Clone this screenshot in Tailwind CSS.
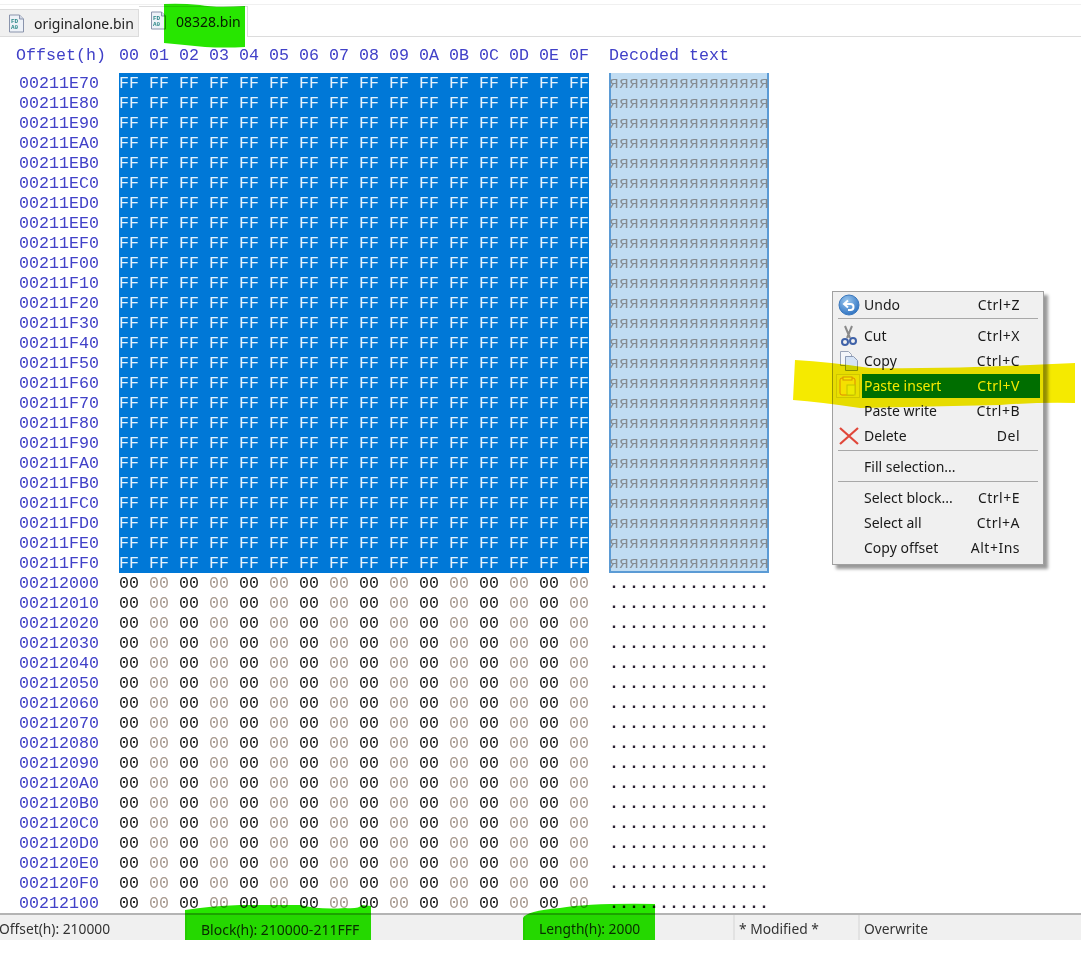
<!DOCTYPE html>
<html lang="en">
<head>
  <meta charset="UTF-8">
  <title>08328.bin</title>
  <script src="https://cdn.jsdelivr.net/npm/@tailwindcss/browser@4"></script>
</head>
<body class="bg-white">
<div class="relative w-[1081px] h-[954px] overflow-hidden bg-white font-['Noto_Sans',sans-serif]">

  <!-- Tabs -->
  <div class="h-[33px] mt-[4px] flex items-end border-t border-b border-t-[#f0f0f0] border-b-[#dcdcdc]">
    <div class="w-[139px] h-[27px] flex items-center gap-[10px] pl-[9px] bg-[#f0f0f0] border-t border-r border-[#dcdcdc] text-[14px] text-[#222]">
      <svg width="15" height="19" viewBox="0 0 15 18" class="shrink-0"><path d="M.5.500h10l4 4v13H.5z" fill="#eef2f8" stroke="#8a94ac"/><path d="M10.500.500v4h4" fill="#cfd6e4" stroke="#8a94ac"/><text x="2" y="8" font-size="6" font-weight="700" fill="#2f8a8a" font-family="Liberation Mono">FD</text><text x="2" y="14" font-size="6" font-weight="700" fill="#2f8a8a" font-family="Liberation Mono">A0</text></svg>
      <span>originalone.bin</span>
    </div>
    <div class="w-[109px] h-[31px] -mb-px flex items-center gap-[10px] pl-[12px] bg-white border-t border-r border-[#dcdcdc] text-[14px] text-[#222]">
      <svg width="15" height="19" viewBox="0 0 15 18" class="shrink-0 -mt-[3px]"><path d="M.5.500h10l4 4v13H.5z" fill="#eef2f8" stroke="#8a94ac"/><path d="M10.500.500v4h4" fill="#cfd6e4" stroke="#8a94ac"/><text x="2" y="8" font-size="6" font-weight="700" fill="#2f8a8a" font-family="Liberation Mono">FD</text><text x="2" y="14" font-size="6" font-weight="700" fill="#2f8a8a" font-family="Liberation Mono">A0</text></svg>
      <span class="-mt-px">08328.bin</span>
    </div>
  </div>

  <!-- Hex view -->
  <div class="font-['Liberation_Mono',monospace] text-[16.67px] leading-[22px] whitespace-nowrap">
    <div class="flex h-[20px] mt-[8px] mb-[8px] text-[#4141c8]">
      <div class="w-[119px] pl-[16px]">Offset(h)</div>
      <div id="head" class="w-[490px] flex"></div>
      <div>Decoded text</div>
    </div>
    <div id="rows"></div>
  </div>

  <!-- Status bar -->
  <div class="h-[27px] flex items-center bg-[#f0f0f0] border-t-2 border-[#b4b4b4] text-[13.8px] text-[#333]">
    <div class="w-[185px] h-full pt-[3px] flex items-center -indent-px">Offset(h): 210000</div>
    <div class="w-[338px] h-full pt-[3px] flex items-center pl-[14px] border-l-2 border-[#e2e2e2] text-[14px]">Block(h): 210000-211FFF</div>
    <div class="w-[210px] h-full pt-[3px] flex items-center pl-[14px] border-l-2 border-[#e2e2e2]">Length(h): 2000</div>
    <div class="w-[125px] h-full pt-[3px] flex items-center pl-[4px] border-l-2 border-[#e2e2e2]">* Modified *</div>
    <div class="flex-1 h-full pt-[3px] flex items-center pl-[4px] border-l-2 border-[#e2e2e2]">Overwrite</div>
  </div>

  <!-- Context menu -->
  <div class="absolute left-[832px] top-[291px] w-[212px] h-[274px] px-[2px] bg-[#f0f0f0] border border-[#a0a0a0] shadow-[4px_4px_3px_rgba(0,0,0,0.4)] text-[14px] text-[#1a1a1a]">
    <div class="flex h-[25px] items-center">
      <div class="w-[28px] flex justify-center"><svg width="22" height="22" viewBox="0 0 22 22"><defs><radialGradient id="u" cx="40%" cy="30%" r="75%"><stop offset="0" stop-color="#9cc8ee"/><stop offset="1" stop-color="#2a6fc0"/></radialGradient></defs><circle cx="11" cy="11" r="10" fill="url(#u)" stroke="#3b78bd"/><path d="M10 6.500 6 10l4 3.500M6.500 10H12.500a3 3 0 0 1 0 6H10" fill="none" stroke="#fff" stroke-width="2"/></svg></div>
      <span class="ml-px">Undo</span><span class="ml-auto mr-[21px] tracking-[0.5px]">Ctrl+Z</span>
    </div>
    <div class="h-[6px] pt-px"><div class="mx-[3px] h-px bg-[#a8a8a8]"></div></div>
    <div class="flex h-[25px] items-center">
      <div class="w-[28px] flex justify-center"><svg width="18" height="22" viewBox="0 0 18 22"><path d="M5 1 10 13M12 1 7 13" stroke="#8a8a8a" stroke-width="2" fill="none"/><circle cx="5" cy="17" r="3" fill="none" stroke="#3f62a8" stroke-width="2"/><circle cx="13" cy="16" r="3" fill="none" stroke="#3f62a8" stroke-width="2"/></svg></div>
      <span class="ml-px">Cut</span><span class="ml-auto mr-[21px] tracking-[0.5px]">Ctrl+X</span>
    </div>
    <div class="flex h-[25px] items-center">
      <div class="w-[28px] flex justify-center"><svg width="20" height="20" viewBox="0 0 20 20"><path d="M1.500.5h8l3 3v11h-11z" fill="#f4f6fa" stroke="#9aa4b8"/><path d="M6.500 5.500h8l4 4v10h-12z" fill="#d6e4f6" stroke="#8c9ab4"/></svg></div>
      <span class="ml-px">Copy</span><span class="ml-auto mr-[21px] tracking-[0.5px]">Ctrl+C</span>
    </div>
    <div class="flex h-[25px] items-center">
      <div class="w-[26px] h-full flex justify-center items-center"><div class="w-[24px] h-[24px] flex justify-center items-center bg-[#f4f4e4] border border-[#d8d8c0]"><svg width="18" height="20" viewBox="0 0 18 20"><rect x="1" y="2" width="15" height="17" rx="2" fill="#fff4c8" stroke="#e89830"/><rect x="4" y="1" width="9" height="3" fill="#fff" stroke="#e0a040"/><rect x="8" y="9" width="8" height="10" fill="#f6fff0" stroke="#c8d8a0"/></svg></div></div>
      <div class="flex flex-1 h-[24px] items-center ml-px mr-px bg-[#0078d7] text-white"><span class="ml-[2px]">Paste insert</span><span class="ml-auto mr-[20px] tracking-[0.5px]">Ctrl+V</span></div>
    </div>
    <div class="flex h-[25px] items-center">
      <div class="w-[28px]"></div>
      <span class="ml-px">Paste write</span><span class="ml-auto mr-[21px] tracking-[0.5px]">Ctrl+B</span>
    </div>
    <div class="flex h-[25px] items-center">
      <div class="w-[28px] flex justify-center"><svg width="20" height="18" viewBox="0 0 20 18"><path d="M1 1 19 17M19 1 1 17" stroke="#e0473a" stroke-width="2.200"/></svg></div>
      <span class="ml-px">Delete</span><span class="ml-auto mr-[21px] tracking-[0.5px]">Del</span>
    </div>
    <div class="h-[6px] pt-[2px]"><div class="mx-[3px] h-px bg-[#a8a8a8]"></div></div>
    <div class="flex h-[25px] items-center pl-[29px]">Fill selection...</div>
    <div class="h-[6px] pt-[2px]"><div class="mx-[3px] h-px bg-[#a8a8a8]"></div></div>
    <div class="flex h-[25px] items-center pl-[29px]"><span>Select block...</span><span class="ml-auto mr-[21px] tracking-[0.5px]">Ctrl+E</span></div>
    <div class="flex h-[25px] items-center pl-[29px]"><span>Select all</span><span class="ml-auto mr-[21px] tracking-[0.5px]">Ctrl+A</span></div>
    <div class="flex h-[25px] items-center pl-[29px]"><span>Copy offset</span><span class="ml-auto mr-[21px] tracking-[0.5px]">Alt+Ins</span></div>
  </div>

  <!-- Marker scribbles -->
  <svg class="absolute left-0 top-0 mix-blend-multiply pointer-events-none" width="1081" height="954" viewBox="0 0 1081 954">
    <path d="M164 4 Q180 3 200 5 Q215 8 245 6 L245 47 Q225 48 205 47 Q185 45 164 43Z" fill="#27e600"/>
    <path d="M185 910 Q210 906 240 905 L300 905 Q320 910 345 908 Q360 909 361 905 L371 906 L371 940 L185 940Z" fill="#27e600"/>
    <path d="M523 918 Q526 911 560 908 Q590 903 655 904 L655 940 L523 940Z" fill="#27e600"/>
    <path d="M795 360 Q830 362 870 368 Q950 369 1030 365 L1075 363 L1075 403 Q1040 402 1000 405 L860 408 Q820 402 793 400Z" fill="#f5ea00"/>
  </svg>
</div>

<script>
  var head = document.getElementById('head');
  var names = ['00','01','02','03','04','05','06','07','08','09','0A','0B','0C','0D','0E','0F'];
  names.forEach(function(n) {
    var s = document.createElement('span');
    s.className = 'w-[30px]';
    s.textContent = n;
    head.appendChild(s);
  });

  var html = '';
  for (var i = 0; i < 42; i++) {
    var offset = (0x211E70 + i * 16).toString(16).toUpperCase().padStart(8, '0');
    var selected = i < 25;
    var cells = '';
    for (var c = 0; c < 16; c++) {
      var cls = c == 15 ? 'w-[20px]' : 'w-[30px]';
      if (selected) {
        cells += '<span class="' + cls + ' text-[#e6f2fb]">FF</span>';
      } else if (c % 2 == 0) {
        cells += '<span class="' + cls + ' text-[#1c1c1c]">00</span>';
      } else {
        cells += '<span class="' + cls + ' text-[#a89a90]">00</span>';
      }
    }
    var decoded;
    if (selected) {
      // the selection outline is drawn inset so the 16 glyphs keep their full width
      var edge = i == 24 ? 'shadow-[inset_2px_0_#5b9bd5,inset_-2px_0_#5b9bd5,inset_0_-2px_#5b9bd5]' : 'shadow-[inset_2px_0_#5b9bd5,inset_-2px_0_#5b9bd5]';
      decoded = '<div class="w-[160px] h-[20px] bg-[#c0dcf2] text-[#858c92] ' + edge + '">' + 'я'.repeat(16) + '</div>';
    } else {
      decoded = '<div class="w-[160px] text-[#2a2030] font-bold">' + '.'.repeat(16) + '</div>';
    }
    html += '<div class="flex h-[20px]">' +
      '<div class="w-[119px] pl-[19px] text-[#4141c8]">' + offset + '</div>' +
      '<div class="w-[470px] flex ' + (selected ? 'bg-[#0078d7]' : '') + '">' + cells + '</div>' +
      '<div class="w-[20px]"></div>' + decoded + '</div>';
  }
  document.getElementById('rows').innerHTML = html;
</script>
</body>
</html>
